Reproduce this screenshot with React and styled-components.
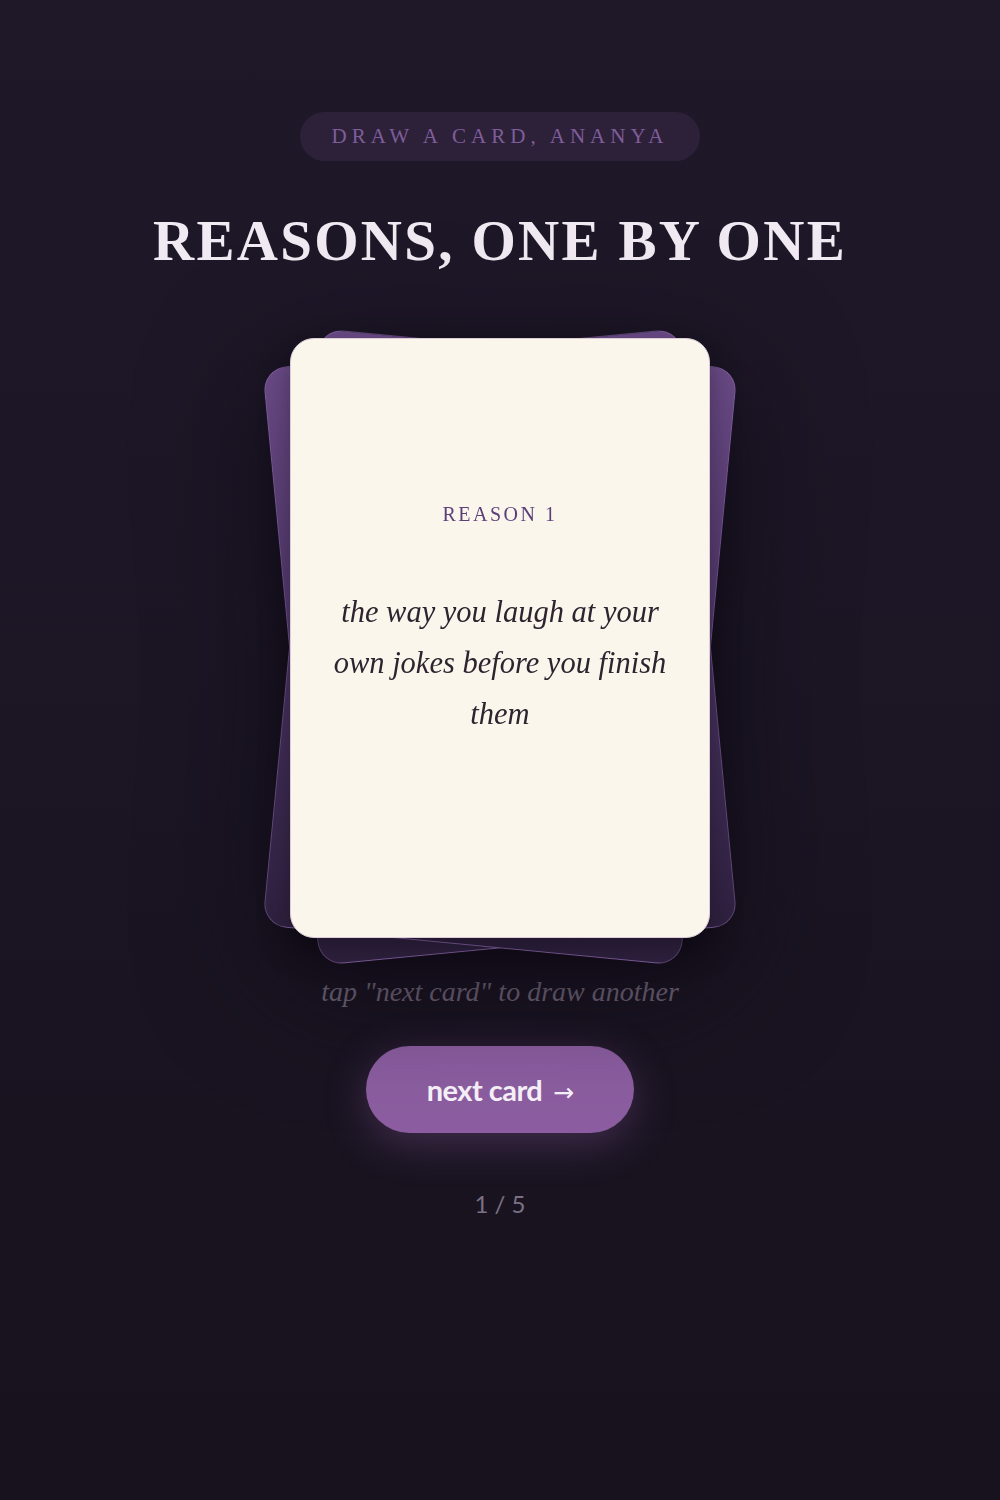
import React, { useState } from 'react';
import styled, { createGlobalStyle } from 'styled-components';

const reasons = [
    'the way you laugh at your own jokes before you finish them',
    'how you always save the last bite for me',
    'the songs you hum when you think no one is listening',
    'the way you remember the smallest things',
    'how home feels like wherever you are',
];

const GlobalStyle = createGlobalStyle`
    html, body {
        margin: 0;
        padding: 0;
    }
    body {
        background: linear-gradient(180deg, #1f1829 0%, #1b1524 50%, #18121e 100%);
        min-height: 1500px;
        font-family: "Liberation Serif", serif;
    }
`;

function App() {
    const [index, setIndex] = useState(0);

    const nextCard = () => setIndex((i) => (i + 1) % reasons.length);

    return (
        <Page>
            <GlobalStyle />
            <Pill>Draw a card, Ananya</Pill>
            <Title>Reasons, one by one</Title>
            <Stack>
                <BackCard $angle={-5.5} />
                <BackCard $angle={5.5} />
                <Card>
                    <Label>Reason {index + 1}</Label>
                    <Quote>{reasons[index]}</Quote>
                </Card>
            </Stack>
            <Hint>tap "next card" to draw another</Hint>
            <NextButton onClick={nextCard}>
                next card <Arrow>→</Arrow>
            </NextButton>
            <Counter>{index + 1} / {reasons.length}</Counter>
        </Page>
    );
}

const Page = styled.div`
    display: flex;
    flex-direction: column;
    align-items: center;
    padding-top: 112px;
    min-height: 1500px;
    box-sizing: border-box;
`;

const Pill = styled.div`
    width: 400px;
    height: 49px;
    box-sizing: border-box;
    display: flex;
    align-items: center;
    justify-content: center;
    border-radius: 25px;
    background: #2c2139;
    color: #7f5d99;
    font-family: "Liberation Serif", serif;
    font-size: 21px;
    letter-spacing: 5px;
    text-transform: uppercase;
`;

const Title = styled.h1`
    margin: 44px 0 0;
    font-family: "Liberation Serif", serif;
    font-weight: 700;
    font-size: 57px;
    line-height: 72px;
    letter-spacing: 2.3px;
    color: #f1eaf3;
    text-transform: uppercase;
`;

const Stack = styled.div`
    position: relative;
    width: 420px;
    height: 600px;
    margin-top: 61px;
    filter: drop-shadow(0 30px 60px rgba(8, 4, 12, 0.55));
`;

const BackCard = styled.div`
    position: absolute;
    inset: 0;
    border-radius: 24px;
    border: 1px solid rgba(150, 115, 180, 0.45);
    background: linear-gradient(180deg, #6a4a86 0%, #4d3567 50%, #2f2140 100%);
    transform: translateY(9px) rotate(${(p) => p.$angle}deg);
`;

const Card = styled.div`
    position: relative;
    height: 100%;
    box-sizing: border-box;
    border-radius: 24px;
    background: #faf6ec;
    border: 1.5px solid #dcccd8;
    box-shadow: 0 12px 30px rgba(0, 0, 0, 0.35);
    display: flex;
    flex-direction: column;
    align-items: center;
    justify-content: center;
    padding: 0 40px 33px;
`;

const Label = styled.div`
    font-family: "Liberation Serif", serif;
    font-size: 20px;
    letter-spacing: 2.5px;
    text-transform: uppercase;
    color: #5b3f79;
`;

const Quote = styled.p`
    margin: 61px 0 0;
    font-family: "Liberation Serif", serif;
    font-style: italic;
    font-size: 30.5px;
    line-height: 51px;
    text-align: center;
    color: #2e2430;
`;

const Hint = styled.div`
    margin-top: 38px;
    font-family: "Liberation Serif", serif;
    font-style: italic;
    font-size: 28px;
    color: #6e6478;
`;

const NextButton = styled.button`
    margin-top: 38px;
    width: 268px;
    height: 87px;
    border: none;
    border-radius: 44px;
    background: #8c5ea1;
    color: #f8f2fa;
    font-family: Lato, "Liberation Sans", sans-serif;
    font-weight: 700;
    font-size: 29px;
    letter-spacing: -0.5px;
    cursor: pointer;
    box-shadow: 0 10px 40px rgba(140, 94, 161, 0.35);
`;

const Arrow = styled.span`
    font-family: "DejaVu Sans", sans-serif;
    font-weight: 400;
    font-size: 25px;
    margin-left: 4px;
`;

const Counter = styled.div`
    margin-top: 56px;
    font-family: Lato, "Liberation Sans", sans-serif;
    font-size: 24px;
    letter-spacing: 0;
    color: #7a7184;
`;

export default App;
